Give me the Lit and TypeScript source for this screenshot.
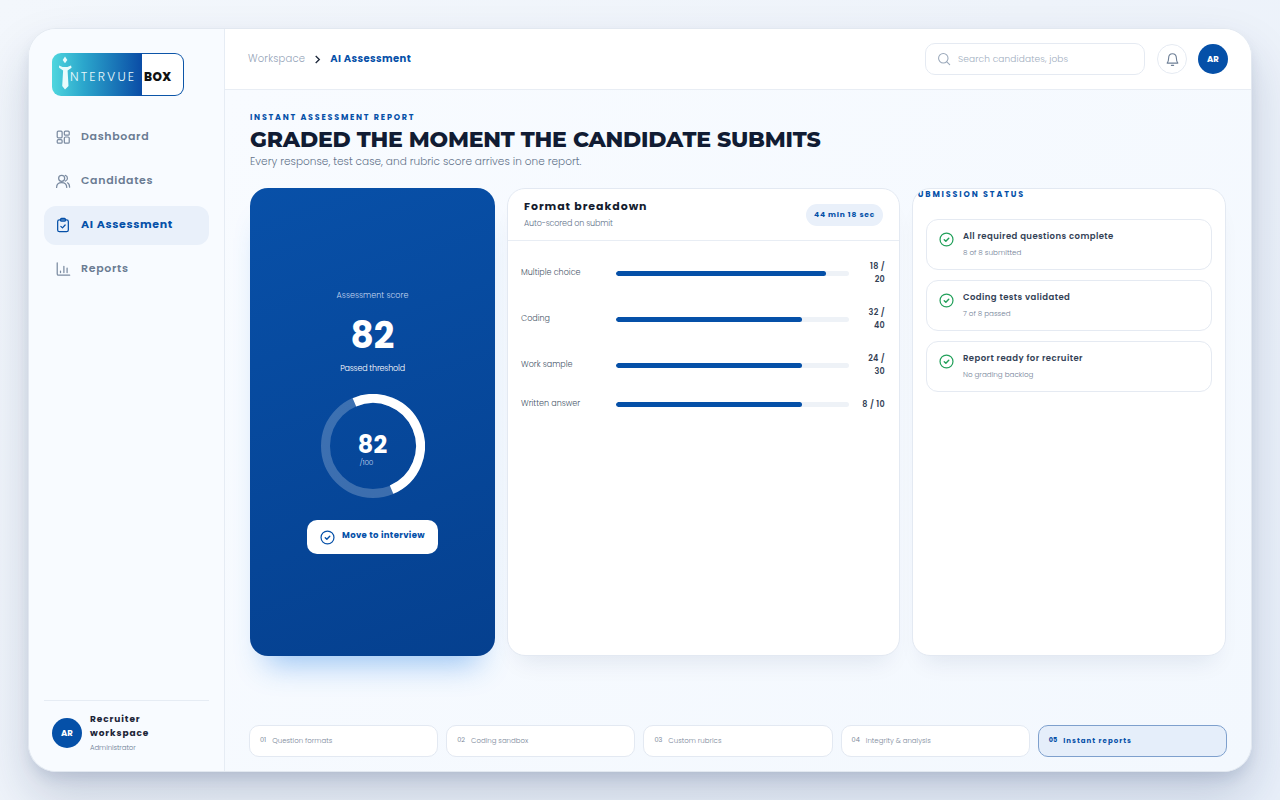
import { LitElement, html, css, svg } from 'lit';
import { customElement } from 'lit/decorators.js';

const checkCircle = html`<svg viewBox="0 0 16 16" fill="none" stroke="currentColor" stroke-width="1.3" stroke-linecap="round" stroke-linejoin="round"><circle cx="8" cy="8" r="6.9"></circle><path stroke-width="1.5" d="M5.6 8.2l1.700 1.600 3.100-3.200"></path></svg>`;

const navIcons: Record<string, unknown> = {
  dashboard: svg`<rect x="2.5" y="2.5" width="5.5" height="7.500" rx="1.200"></rect><rect x="10.500" y="2.500" width="5.500" height="4.500" rx="1.200"></rect><rect x="10.500" y="9" width="5.500" height="7" rx="1.200"></rect><rect x="2.500" y="12" width="5.500" height="4" rx="1.200"></rect>`,
  candidates: svg`<circle cx="7.500" cy="6" r="3.400"></circle><path d="M1.800 16.200c0-3.500 2.400-5.500 5.700-5.500s5.700 2 5.700 5.500"></path><path d="M11.500 2.700c1.600.4 2.500 1.700 2.500 3.200s-.9 2.800-2.400 3.200"></path><path d="M14 11c1.500.7 2.400 2.500 2.400 5"></path>`,
  assessment: svg`<rect x="3" y="3.200" width="12" height="13.300" rx="2"></rect><rect x="6.300" y="1.500" width="5.400" height="3.200" rx="1"></rect><path d="M6.600 10.500l1.800 1.700 3-3.200"></path>`,
  reports: svg`<path d="M2.500 2v12.500c0 1 .6 1.500 1.500 1.500h12.500"></path><path d="M6.200 11.500v1.500M10 6v7M13.600 8v5"></path>`,
};

const nav = [
  { id: 'dashboard', label: 'Dashboard' },
  { id: 'candidates', label: 'Candidates' },
  { id: 'assessment', label: 'AI Assessment', active: true },
  { id: 'reports', label: 'Reports' },
];

const scores = [
  { label: 'Multiple choice', value: '18 / 20', pct: 90 },
  { label: 'Coding', value: '32 / 40', pct: 80 },
  { label: 'Work sample', value: '24 / 30', pct: 80 },
  { label: 'Written answer', value: '8 / 10', pct: 80 },
];

const checks = [
  { title: 'All required questions complete', sub: '8 of 8 submitted' },
  { title: 'Coding tests validated', sub: '7 of 8 passed' },
  { title: 'Report ready for recruiter', sub: 'No grading backlog' },
];

const steps = ['Question formats', 'Coding sandbox', 'Custom rubrics', 'Integrity & analysis', 'Instant reports'];

@customElement('app-root')
export class AppRoot extends LitElement {
  static styles = css`
    :host {
      display: block;
      height: 800px;
      box-sizing: border-box;
      padding: 28px;
      overflow: hidden;
      background: linear-gradient(135deg, #f3f7fc 0%, #eef3fa 50%, #e9f0fa 100%);
      font-family: Poppins, Inter, 'Noto Sans', sans-serif;
      color: #111c33;
    }
    * { box-sizing: border-box; }
    svg { display: block; }

    .wrap {
      height: 744px;
      border-radius: 28px;
      box-shadow: 0 26px 50px rgb(15 40 90 / 18%), 0 8px 16px -4px rgb(15 40 90 / 14%);
    }
    .shell {
      display: flex;
      height: 744px;
      border: 1px solid #e2e8f0;
      border-radius: 28px;
      overflow: hidden;
      background: #f6faff;
    }

    .sidebar {
      width: 196px;
      flex: none;
      display: flex;
      flex-direction: column;
      padding: 24px 15px 0;
      border-right: 1px solid #e6ecf4;
      background: #f8fbff;
    }
    .logo {
      display: flex;
      width: 132px;
      height: 43px;
      margin-left: 8px;
    }
    .logo-left {
      position: relative;
      width: 90px;
      flex: none;
      display: flex;
      align-items: center;
      padding: 5px 0 0 18px;
      border-radius: 9px 0 0 9px;
      background: linear-gradient(90deg, #4fd6de 0%, #2ba6cc 35%, #0a4ca6 100%);
      color: #e6f7fb;
      font-size: 12.5px;
      font-weight: 300;
      letter-spacing: 2.1px;
      white-space: nowrap;
    }
    .logo-left svg {
      position: absolute;
      left: 5px;
      top: 2px;
      width: 16px;
      height: 35px;
    }
    .logo-right {
      flex: 1;
      display: flex;
      align-items: center;
      padding: 5px 0 0 2px;
      border: 1px solid #0c55a8;
      border-left: 0;
      border-radius: 0 9px 9px 0;
      background: #fff;
      color: #111;
      font-size: 12px;
      font-weight: 800;
      letter-spacing: 0.4px;
    }
    .nav {
      display: flex;
      flex-direction: column;
      gap: 5px;
      margin-top: 22px;
    }
    .nav-item {
      display: flex;
      align-items: center;
      gap: 10px;
      height: 39px;
      padding: 0 11px 2px;
      border-radius: 12px;
      color: #6b7c93;
      font-size: 11px;
      font-weight: 600;
      letter-spacing: 0.65px;
    }
    .nav-item svg {
      width: 16px;
      height: 16px;
      flex: none;
      fill: none;
      stroke: #7b8ba1;
      stroke-width: 1.4;
      stroke-linecap: round;
      stroke-linejoin: round;
    }
    .nav-item.active {
      background: #e9f0fa;
      color: #0550a8;
      font-weight: 700;
    }
    .nav-item.active svg { stroke: #0550a8; }
    .side-foot {
      margin-top: auto;
      display: flex;
      align-items: center;
      gap: 8px;
      height: 71px;
      padding: 0 8px 6px;
      border-top: 1px solid #e6ecf4;
    }
    .avatar {
      width: 30px;
      height: 30px;
      flex: none;
      display: flex;
      align-items: center;
      justify-content: center;
      border-radius: 50%;
      background: #0550a8;
      color: #fff;
      font-size: 8.5px;
      font-weight: 700;
    }
    .foot-name {
      font-size: 9px;
      font-weight: 700;
      line-height: 14px;
      letter-spacing: 0.9px;
      color: #1c2538;
    }
    .foot-role {
      margin-top: 2px;
      font-size: 7px;
      font-weight: 300;
      line-height: 12px;
      letter-spacing: -0.1px;
      color: #6b7c93;
    }

    .content {
      flex: 1;
      min-width: 0;
      display: flex;
      flex-direction: column;
    }
    .topbar {
      flex: none;
      display: flex;
      align-items: center;
      gap: 11px;
      height: 61px;
      padding: 0 23px;
      background: #fff;
      border-bottom: 1px solid #e8edf4;
    }
    .crumbs {
      display: flex;
      align-items: center;
      margin-right: auto;
      font-size: 10px;
    }
    .crumb-a { color: #94a3b8; font-weight: 300; letter-spacing: 0.2px; }
    .crumb-b { color: #0550a8; font-weight: 700; letter-spacing: 0.4px; }
    .crumbs svg { width: 9px; height: 9px; margin: 1px 8px 0; }
    .search {
      display: flex;
      align-items: center;
      gap: 7px;
      width: 220px;
      height: 32px;
      margin-right: 1px;
      padding: 0 11px;
      border: 1px solid #e5eaf2;
      border-radius: 10px;
      color: #a0adbe;
      font-size: 9px;
      font-weight: 300;
      letter-spacing: 0.13px;
    }
    .search svg { width: 14px; height: 14px; flex: none; }
    .bell {
      width: 30px;
      height: 30px;
      display: flex;
      align-items: center;
      justify-content: center;
      border: 1px solid #e5eaf2;
      border-radius: 50%;
    }
    .bell svg { width: 15px; height: 15px; }

    .main {
      flex: 1;
      min-height: 0;
      display: flex;
      flex-direction: column;
      padding: 22px 24px 14px 25px;
      background: linear-gradient(135deg, #f8fbff, #f3f8fe);
    }
    .eyebrow {
      font-size: 8px;
      font-weight: 700;
      line-height: 12px;
      letter-spacing: 1.76px;
      color: #0550a8;
    }
    h1 {
      margin: 1px 0 0;
      font-family: Montserrat, Inter, sans-serif;
      font-size: 22px;
      font-weight: 800;
      line-height: 29px;
      letter-spacing: -0.2px;
      color: #111c33;
    }
    .lede {
      margin-top: 1px;
      font-size: 10.5px;
      font-weight: 300;
      line-height: 14px;
      letter-spacing: 0.03px;
      color: #64748b;
    }
    .grid {
      display: grid;
      grid-template-columns: 245px 393px 314px;
      gap: 12px;
      height: 468px;
      margin-top: 19px;
    }
    .card {
      min-width: 0;
      border: 1px solid #e3e9f2;
      border-radius: 18px;
      background: #fff;
      box-shadow: 0 16px 24px -12px rgb(15 40 90 / 10%);
    }

    .score {
      display: flex;
      flex-direction: column;
      align-items: center;
      justify-content: center;
      border: 0;
      background: linear-gradient(160deg, #0850a8 0%, #05408f 100%);
      box-shadow: 0 24px 30px -16px rgb(40 130 230 / 45%);
      color: #fff;
    }
    .score-label {
      font-size: 8px;
      font-weight: 300;
      line-height: 12px;
      color: #c3d6f0;
    }
    .score-num {
      margin-top: 12px;
      font-size: 36px;
      font-weight: 700;
      line-height: 44px;
    }
    .score-state {
      margin-top: 6px;
      font-size: 8px;
      font-weight: 300;
      line-height: 10px;
      letter-spacing: -0.2px;
    }
    .ring {
      position: relative;
      width: 104px;
      height: 104px;
      margin-top: 20px;
    }
    .ring-text {
      position: absolute;
      inset: 0;
      display: flex;
      flex-direction: column;
      align-items: center;
      padding-top: 38px;
    }
    .ring-num { font-size: 24px; font-weight: 700; line-height: 26px; }
    .ring-sub {
      align-self: flex-start;
      margin-left: 39px;
      font-size: 7.5px;
      font-weight: 300;
      line-height: 9px;
      letter-spacing: -0.3px;
      color: #c3d6f0;
    }
    .move {
      display: flex;
      align-items: center;
      gap: 7px;
      height: 34px;
      margin-top: 22px;
      padding: 0 13px;
      border-radius: 10px;
      background: #fff;
      color: #0550a8;
      font-size: 8.5px;
      font-weight: 700;
      letter-spacing: 0.34px;
    }
    .move svg { width: 15px; height: 15px; }
    .move span { margin-top: -4px; }

    .head {
      display: flex;
      align-items: center;
      justify-content: space-between;
      height: 52px;
      padding: 0 16px;
      border-bottom: 1px solid #e8edf4;
    }
    .head-title {
      margin-top: -1px;
      font-size: 11px;
      font-weight: 700;
      line-height: 17px;
      letter-spacing: 0.95px;
      color: #141c2e;
    }
    .head-sub {
      margin-top: 2px;
      font-size: 8px;
      font-weight: 300;
      line-height: 14px;
      letter-spacing: -0.15px;
      color: #64748b;
    }
    .pill {
      padding: 0 8px;
      border-radius: 11px;
      background: #e9f0fa;
      color: #0550a8;
      font-size: 7.5px;
      font-weight: 700;
      line-height: 22px;
      letter-spacing: 0.75px;
    }
    .rows {
      display: flex;
      flex-direction: column;
      gap: 20px;
      padding: 19px 14px 0 13px;
    }
    .row {
      display: grid;
      grid-template-columns: 95px 233px 1fr;
      align-items: center;
    }
    .row-label {
      font-size: 8px;
      font-weight: 300;
      color: #475569;
      margin-top: -1px;
    }
    .track {
      height: 5px;
      border-radius: 3px;
      background: #eef2f7;
      overflow: hidden;
    }
    .fill {
      height: 100%;
      border-radius: 3px;
      background: #0550a8;
    }
    .row-value {
      justify-self: end;
      width: 24px;
      font-size: 8px;
      font-weight: 600;
      line-height: 13px;
      letter-spacing: 0.3px;
      text-align: right;
      color: #334155;
    }

    .status { padding: 0 13px; overflow: hidden; }
    .status-title {
      margin: 0 0 19px -15px;
      font-size: 8px;
      font-weight: 700;
      line-height: 11px;
      letter-spacing: 1.85px;
      white-space: nowrap;
      color: #0550a8;
    }
    .checks { display: flex; flex-direction: column; gap: 10px; }
    .check {
      display: flex;
      gap: 9px;
      height: 51px;
      padding: 10px 12px;
      border: 1px solid #e5eaf2;
      border-radius: 12px;
    }
    .check svg { width: 15px; height: 15px; flex: none; color: #22a05a; margin-top: 2px; }
    .check-title {
      font-size: 8.5px;
      font-weight: 600;
      line-height: 12px;
      letter-spacing: 0.42px;
      color: #334155;
    }
    .check-sub {
      margin-top: 5px;
      font-size: 7.2px;
      font-weight: 300;
      line-height: 11px;
      color: #718096;
    }

    .steps {
      display: grid;
      grid-template-columns: repeat(5, 1fr);
      gap: 8px;
      margin: auto 0 0 -1px;
    }
    .step {
      display: flex;
      align-items: center;
      gap: 6px;
      height: 32px;
      padding: 0 10px;
      border: 1px solid #e3e9f2;
      border-radius: 10px;
      background: #fff;
      color: #7a8799;
      font-size: 7px;
      font-weight: 300;
    }
    .step b { font-weight: 400; font-size: 6.5px; margin-top: -3px; }
    .step.active {
      background: #e5eefa;
      border-color: #7ea0cd;
      color: #0550a8;
      font-weight: 700;
      letter-spacing: 1px;
    }
    .step.active b { font-weight: 700; letter-spacing: 0; }
  `;

  render() {
    return html`
      <div class="wrap">
        <div class="shell">
          <aside class="sidebar">
            <div class="logo">
              <div class="logo-left">
                <svg viewBox="0 0 16 35" fill="#e9fbfc">
                  <path d="M8 1.500l2.300 3.500L8 8.300 5.700 5z"></path>
                  <path d="M2 10.500l3.600 1.500h4.800l3.600-1.500.6 2.300-4 2.700.9 15.500L8 34.500l-2.800-3.500.9-15.500-4-2.700z"></path>
                </svg>
                NTERVUE
              </div>
              <div class="logo-right">BOX</div>
            </div>
            <nav class="nav">
              ${nav.map(
                (item) => html`
                  <div class="nav-item ${item.active ? 'active' : ''}">
                    <svg viewBox="0 0 18 18">${navIcons[item.id]}</svg>
                    ${item.label}
                  </div>
                `
              )}
            </nav>
            <div class="side-foot">
              <div class="avatar">AR</div>
              <div>
                <div class="foot-name">Recruiter workspace</div>
                <div class="foot-role">Administrator</div>
              </div>
            </div>
          </aside>
          <div class="content">
            <header class="topbar">
              <div class="crumbs">
                <span class="crumb-a">Workspace</span>
                <svg viewBox="0 0 10 10" fill="none" stroke="#1f2a3d" stroke-width="1.500"><path d="M3 1l4 4-4 4"></path></svg>
                <span class="crumb-b">AI Assessment</span>
              </div>
              <div class="search">
                <svg viewBox="0 0 16 16" fill="none" stroke="#9aa8ba" stroke-width="1.200" stroke-linecap="round"><circle cx="7.200" cy="7.200" r="5.400"></circle><path d="M11.200 11.200l3.300 3.300"></path></svg>
                Search candidates, jobs
              </div>
              <div class="bell">
                <svg viewBox="0 0 16 16" fill="none" stroke="#6f8097" stroke-width="1.200" stroke-linecap="round" stroke-linejoin="round"><path d="M8 1.800c-2.600 0-4.100 2-4.100 4.400 0 3-.6 4.400-1.600 5.600h11.400c-1-1.200-1.600-2.600-1.600-5.600C12.100 3.800 10.600 1.800 8 1.800z"></path><path d="M6.800 14.200h2.400"></path></svg>
              </div>
              <div class="avatar">AR</div>
            </header>
            <main class="main">
              <div class="eyebrow">INSTANT ASSESSMENT REPORT</div>
              <h1>GRADED THE MOMENT THE CANDIDATE SUBMITS</h1>
              <div class="lede">Every response, test case, and rubric score arrives in one report.</div>
              <section class="grid">
                <div class="card score">
                  <div class="score-label">Assessment score</div>
                  <div class="score-num">82</div>
                  <div class="score-state">Passed threshold</div>
                  <div class="ring">
                    <svg width="104" height="104" viewBox="0 0 104 104" fill="none" stroke-width="9">
                      <circle cx="52" cy="52" r="47.500" stroke="rgb(255 255 255 / 22%)"></circle>
                      <circle cx="52" cy="52" r="47.500" stroke="#fff" pathLength="100" stroke-dasharray="50 50" transform="rotate(-113 52 52)"></circle>
                    </svg>
                    <div class="ring-text">
                      <div class="ring-num">82</div>
                      <div class="ring-sub">/100</div>
                    </div>
                  </div>
                  <div class="move">${checkCircle}<span>Move to interview</span></div>
                </div>
                <div class="card">
                  <div class="head">
                    <div>
                      <div class="head-title">Format breakdown</div>
                      <div class="head-sub">Auto-scored on submit</div>
                    </div>
                    <div class="pill">44 min 18 sec</div>
                  </div>
                  <div class="rows">
                    ${scores.map(
                      (s) => html`
                        <div class="row">
                          <div class="row-label">${s.label}</div>
                          <div class="track"><div class="fill" style="width:${s.pct}%"></div></div>
                          <div class="row-value">${s.value}</div>
                        </div>
                      `
                    )}
                  </div>
                </div>
                <div class="card status">
                  <div class="status-title">SUBMISSION STATUS</div>
                  <div class="checks">
                    ${checks.map(
                      (c) => html`
                        <div class="check">
                          ${checkCircle}
                          <div>
                            <div class="check-title">${c.title}</div>
                            <div class="check-sub">${c.sub}</div>
                          </div>
                        </div>
                      `
                    )}
                  </div>
                </div>
              </section>
              <section class="steps">
                ${steps.map(
                  (label, i) => html`
                    <div class="step ${i === 4 ? 'active' : ''}"><b>0${i + 1}</b>${label}</div>
                  `
                )}
              </section>
            </main>
          </div>
        </div>
      </div>
    `;
  }
}
